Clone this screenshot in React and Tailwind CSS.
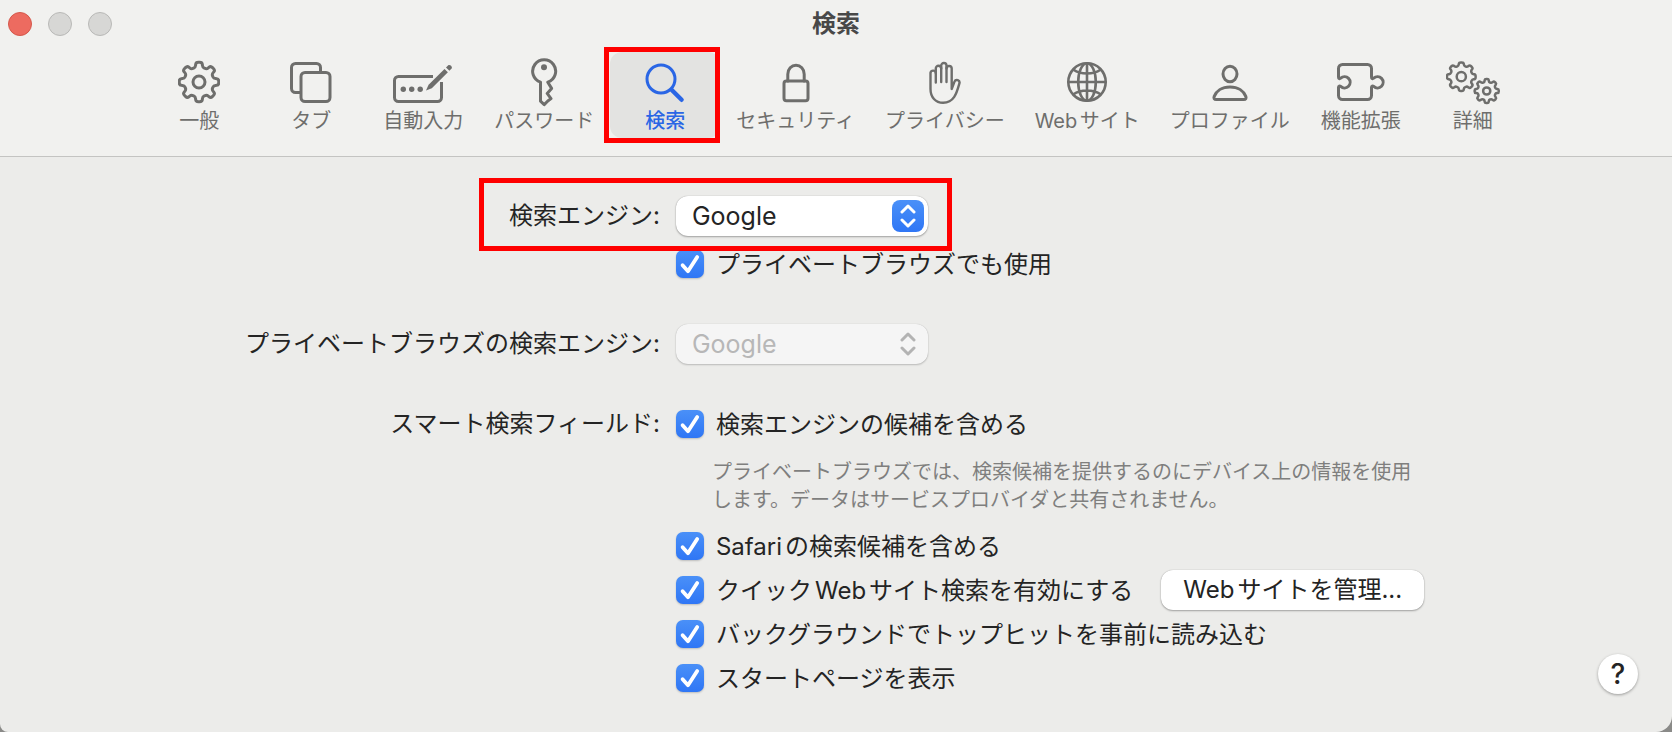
import { useState } from 'react'

// rounded outline of an eight-toothed cog around (cx, cy)
const gearPath = (cx, cy, outer, inner) => {
  const pts = []
  for (let i = 0; i < 8; i++) {
    const mid = i * 45 - 90
    const steps = [[-14, inner], [-9, outer], [9, outer], [14, inner]]
    steps.forEach(([deg, r]) => {
      const a = ((mid + deg) * Math.PI) / 180
      pts.push([cx + r * Math.cos(a), cy + r * Math.sin(a)])
    })
  }
  const lerp = (p, q, t) => [p[0] + (q[0] - p[0]) * t, p[1] + (q[1] - p[1]) * t]
  const fmt = (p) => p[0].toFixed(2) + ' ' + p[1].toFixed(2)
  let d = ''
  pts.forEach((p, i) => {
    const prev = pts[(i + pts.length - 1) % pts.length]
    const next = pts[(i + 1) % pts.length]
    d += (i === 0 ? 'M' : 'L') + fmt(lerp(p, prev, 0.4)) + 'Q' + fmt(p) + ' ' + fmt(lerp(p, next, 0.4))
  })
  return d + 'Z'
}

const Icon = ({ w, stroke = 3, children }) => (
  <svg
    width={w}
    height="52"
    viewBox={`0 0 ${w} 52`}
    fill="none"
    stroke="currentColor"
    strokeWidth={stroke}
    strokeLinecap="round"
    strokeLinejoin="round"
    aria-hidden="true"
  >
    {children}
  </svg>
)

const GearIcon = () => (
  <Icon w={42}>
    <path d={gearPath(21, 26, 20, 15)} />
    <circle cx="21" cy="26" r="6" />
  </Icon>
)

const TabsIcon = () => (
  <Icon w={42}>
    <path d="M10 36.5H5.5a4 4 0 0 1-4-4v-21a4 4 0 0 1 4-4h21a4 4 0 0 1 4 4V15" strokeLinecap="butt" />
    <rect x="11" y="16.5" width="29" height="29" rx="4" />
  </Icon>
)

const AutofillIcon = () => (
  <Icon w={60}>
    <path d="M40 20.5H5.5a4 4 0 0 0-4 4v17a4 4 0 0 0 4 4h39a4 4 0 0 0 4-4V26" strokeLinecap="butt" />
    <g fill="currentColor" stroke="none">
      <circle cx="10.3" cy="33.3" r="2.7" />
      <circle cx="18.7" cy="33.3" r="2.7" />
      <circle cx="27.2" cy="33.3" r="2.7" />
      <path d="M33 34.6l2.6-5.8L51.5 12.9l3.4 3.4L38.8 32.2z" />
      <path d="M53 11.4l2-2c1.8-1.6 5.2 1.4 3.4 3.4l-2 2z" />
    </g>
  </Icon>
)

const KeyIcon = () => (
  <Icon w={28}>
    <path d="M10.5 26.2A11.5 11.5 0 1 1 17.8 26.2L21.6 32.4 17.2 37.4 21 42.6 17.8 45 14.2 48.6 10.5 45.2Z" />
    <circle cx="14" cy="11.3" r="3" fill="currentColor" stroke="none" />
  </Icon>
)

const SearchIcon = () => (
  <Icon w={40}>
    <circle cx="16" cy="23" r="14" />
    <path d="M26.8 34l9.8 9.8" strokeWidth="4.4" />
  </Icon>
)

const LockIcon = () => (
  <Icon w={28}>
    <rect x="2" y="25" width="24" height="19.8" rx="2.5" />
    <path d="M5.8 25v-6.8a8.2 9 0 0 1 16.4 0V25" />
  </Icon>
)

const HandIcon = () => (
  <Icon w={32} stroke={2.4}>
    <path d="M6.8 26.5V16.8a2.7 2.7 0 0 0-5.3 0V33c0 8.2 5 13.8 12.6 13.8 11.4 0 13.8-10.6 16.3-19.4 .9-3.2-3.6-4.9-4.9-1.8L22.7 33V12.6a2.6 2.6 0 0 0-5.2 0V26" />
    <path d="M6.8 17v-4.6a2.7 2.7 0 0 1 5.4 0V26" />
    <path d="M12.2 12.4V9.6a2.65 2.65 0 0 1 5.3 0v3" />
  </Icon>
)

const GlobeIcon = () => (
  <Icon w={40} stroke={2.6}>
    <circle cx="20" cy="26" r="18.7" />
    <ellipse cx="20" cy="26" rx="8.8" ry="18.7" />
    <path d="M20 7.5v37M1.5 26h37M6.5 13.8c7 5 20 5 27 0M6.5 38.2c7-5 20-5 27 0" />
  </Icon>
)

const PersonIcon = () => (
  <Icon w={36}>
    <ellipse cx="18" cy="18" rx="7" ry="7.7" />
    <path d="M4.2 43.6h27.6c1.9 0 2.7-1.4 2-3.2C31.8 35.2 26.3 31 18 31S4.2 35.2 2.2 40.4c-.7 1.8.1 3.2 2 3.2Z" />
  </Icon>
)

const PuzzleIcon = () => (
  <Icon w={48}>
    <path d="M1.5 21V12.5a4 4 0 0 1 4-4h25a4 4 0 0 1 4 4V21c0 1.8 1.2 2 2.2 1.2a5.6 5.6 0 1 1 0 8.2c-1-.8-2.2-.6-2.2 1.2v8a4 4 0 0 1-4 4h-25a4 4 0 0 1-4-4v-8c0-1.8 1.2-2 2.2-1.2a5.6 5.6 0 1 0 0-8.2c-1 .8-2.2.6-2.2-1.2Z" />
  </Icon>
)

const GearsIcon = () => (
  <Icon w={54} stroke={2.5}>
    <path d={gearPath(15.3, 20.7, 14.5, 11.2)} />
    <circle cx="15.3" cy="20.7" r="4.6" />
    <path d={gearPath(40.7, 35, 12.2, 9.2)} />
    <circle cx="40.7" cy="35" r="3.6" />
  </Icon>
)

const tabs = [
  { id: 'general', label: '一般', icon: GearIcon },
  { id: 'tabs', label: 'タブ', icon: TabsIcon },
  { id: 'autofill', label: '自動入力', icon: AutofillIcon },
  { id: 'passwords', label: 'パスワード', icon: KeyIcon },
  { id: 'search', label: '検索', icon: SearchIcon },
  { id: 'security', label: 'セキュリティ', icon: LockIcon },
  { id: 'privacy', label: 'プライバシー', icon: HandIcon },
  { id: 'websites', label: 'Webサイト', icon: GlobeIcon },
  { id: 'profiles', label: 'プロファイル', icon: PersonIcon },
  { id: 'extensions', label: '機能拡張', icon: PuzzleIcon },
  { id: 'advanced', label: '詳細', icon: GearsIcon },
]

const Tab = ({ tab, active, onClick }) => (
  <button
    onClick={onClick}
    className={
      'relative flex min-w-[110px] flex-col items-center rounded-xl px-3.5 pt-1 pb-1 text-xl leading-[26px] whitespace-nowrap ' +
      (active ? 'bg-[#e3e3e1] font-medium text-[#2a66e5]' : 'text-[#6e6e6c]')
    }
  >
    <tab.icon />
    {tab.label}
    {tab.id === 'search' && <span className="absolute -inset-y-[5px] right-0 -left-1.5 border-5 border-[#ff0000]"></span>}
  </button>
)

const Row = ({ label, htmlFor, className = '', children }) => (
  <div className={'grid grid-cols-[41.3%_1fr] items-center gap-x-4 ' + className}>
    {htmlFor ? <label htmlFor={htmlFor} className="text-right">{label}</label> : <div className="text-right">{label}</div>}
    <div className="relative flex items-center">{children}</div>
  </div>
)

const EngineSelect = ({ id, disabled }) => (
  <div className="relative w-[252px]">
    <select
      id={id}
      disabled={disabled}
      className="block h-10 w-full appearance-none rounded-xl bg-white pl-4 text-[25px] shadow-[0_0_1px_rgba(0,0,0,0.3),0_1px_2px_rgba(0,0,0,0.3)] disabled:bg-[#f5f5f5] disabled:text-[#b7b7b7] disabled:opacity-100 disabled:shadow-[0_0_1px_rgba(0,0,0,0.2),0_1px_2px_rgba(0,0,0,0.2)]"
    >
      <option>Google</option>
    </select>
    <span
      className={
        'pointer-events-none absolute top-1 right-1 flex size-8 items-center justify-center rounded-lg ' +
        (disabled ? 'text-[#b3b3b3]' : 'bg-linear-to-b from-[#4a90f8] to-[#2f76f5] text-white')
      }
    >
      <svg width="16" height="24" viewBox="0 0 16 24" fill="none" stroke="currentColor" strokeWidth="3" strokeLinecap="round" strokeLinejoin="round">
        <path d="M2 8l6-6 6 6M2 16l6 6 6-6" />
      </svg>
    </span>
  </div>
)

const Check = ({ id, label, checked, onChange }) => (
  <div className="flex h-7 items-center gap-3">
    <span className="relative size-7">
      <input
        type="checkbox"
        id={id}
        checked={checked}
        onChange={onChange}
        className="block size-7 appearance-none rounded-[7px] bg-white shadow-[0_1px_2px_rgba(0,0,0,0.2)] checked:bg-linear-to-b checked:from-[#4a90f8] checked:to-[#2f76f5]"
      />
      {checked && (
        <svg className="pointer-events-none absolute inset-0" width="28" height="28" viewBox="0 0 28 28" fill="none" stroke="#fff" strokeWidth="3.8" strokeLinecap="round" strokeLinejoin="round">
          <path d="M6.6 15.2l5.4 6L21.2 7" />
        </svg>
      )}
    </span>
    <label htmlFor={id} className="pt-0.5 whitespace-nowrap">{label}</label>
  </div>
)

function App() {
  const [current, setCurrent] = useState('search')
  const [options, setOptions] = useState({
    privateToo: true,
    engineHints: true,
    safariHints: true,
    quickSearch: true,
    preload: true,
    startPage: true,
  })

  const bind = (key) => ({
    id: key,
    checked: options[key],
    onChange: () => setOptions({ ...options, [key]: !options[key] }),
  })

  return (
    <div className="bg-[#8a8a88]">
      <div lang="ja" className="flex min-h-screen flex-col overflow-hidden rounded-br-2xl rounded-bl-lg bg-[#ececea] font-['Inter','Noto_Sans_CJK_JP',sans-serif] text-2xl leading-7 text-[#242424] [text-autospace:normal]">
        <header className="border-b border-[#c4c4c2] bg-[#f1f1ef] pb-[18px]">
          <div className="grid h-12 grid-cols-[1fr_auto_1fr] items-center px-2">
            <div className="flex gap-4">
              <button aria-label="閉じる" className="size-6 rounded-full border border-[#d5584b] bg-[#ed6b60]"></button>
              <button aria-label="しまう" className="size-6 rounded-full border border-[#b9b9b7] bg-[#d7d7d5]"></button>
              <button aria-label="拡大" className="size-6 rounded-full border border-[#b9b9b7] bg-[#d7d7d5]"></button>
            </div>
            <h1 className="font-bold text-[#484848]">検索</h1>
          </div>
          <nav className="mt-1 flex justify-center gap-0.5">
            {tabs.map((tab) => (
              <Tab key={tab.id} tab={tab} active={tab.id === current} onClick={() => setCurrent(tab.id)} />
            ))}
          </nav>
        </header>

        <main className="flex flex-1 pt-[39px] pr-[34px] pb-[38px]">
          <div className="flex-1">
            <Row label="検索エンジン:" htmlFor="engine">
              <EngineSelect id="engine" />
              <span className="pointer-events-none absolute -top-[18px] -left-[197px] z-10 h-[73px] w-[473px] border-5 border-[#ff0000]"></span>
            </Row>
            <Row className="mt-3.5">
              <Check {...bind('privateToo')} label="プライベートブラウズでも使用" />
            </Row>

            <Row label="プライベートブラウズの検索エンジン:" htmlFor="privateEngine" className="mt-[46px]">
              <EngineSelect id="privateEngine" disabled />
            </Row>

            <Row label="スマート検索フィールド:" className="mt-[46px]">
              <Check {...bind('engineHints')} label="検索エンジンの候補を含める" />
            </Row>
            <Row className="mt-5">
              <p className="max-w-[752px] pl-9 text-xl leading-7 text-[#7f7f7e]">
                プライベートブラウズでは、検索候補を提供するのにデバイス上の情報を使用します。データはサービスプロバイダと共有されません。
              </p>
            </Row>
            <div className="mt-[18px] flex flex-col gap-4">
              <Row>
                <Check {...bind('safariHints')} label="Safariの検索候補を含める" />
              </Row>
              <Row>
                <Check {...bind('quickSearch')} label="クイックWebサイト検索を有効にする" />
                <button className="-my-1.5 ml-7 h-10 rounded-xl bg-white px-[22px] whitespace-nowrap shadow-[0_0_1px_rgba(0,0,0,0.3),0_1px_2px_rgba(0,0,0,0.3)]">Webサイトを管理...</button>
              </Row>
              <Row>
                <Check {...bind('preload')} label="バックグラウンドでトップヒットを事前に読み込む" />
              </Row>
              <Row>
                <Check {...bind('startPage')} label="スタートページを表示" />
              </Row>
            </div>
          </div>
          <button aria-label="ヘルプ" className="size-10 self-end rounded-full bg-white text-[28px] font-medium shadow-[0_1px_3px_rgba(0,0,0,0.35)]">?</button>
        </main>
      </div>
    </div>
  )
}

export default App
